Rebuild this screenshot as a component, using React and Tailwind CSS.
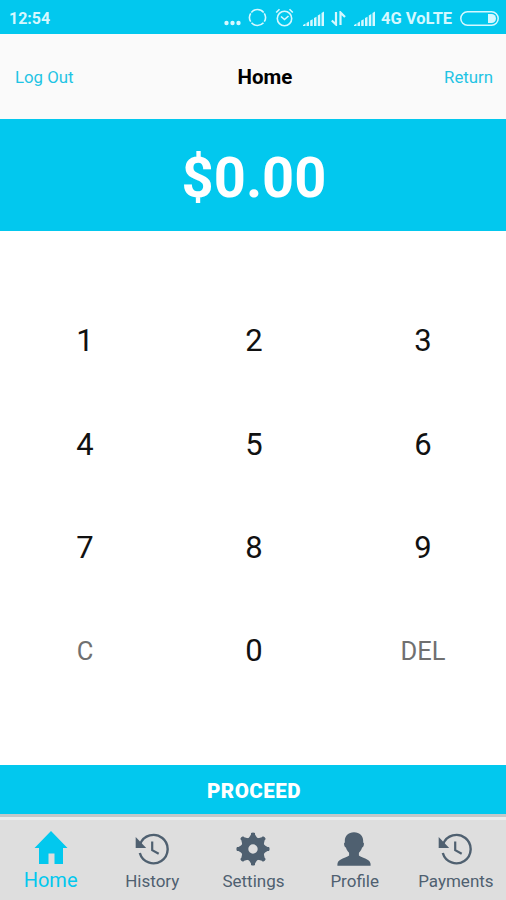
import { useState } from 'react';

const KEYS = ['1', '2', '3', '4', '5', '6', '7', '8', '9', 'C', '0', 'DEL'];

function HomeIcon() {
  return (
    <svg width="34" height="34" viewBox="0 0 34 34" fill="currentColor">
      <path d="M17 0 33.500 17H29v16h-8.500V22.500h-6V33H5V17H.5z" />
    </svg>
  );
}

function HistoryIcon() {
  return (
    <svg width="34" height="34" viewBox="0 0 34 34" fill="none" stroke="currentColor">
      <path d="M5.200 12A14.200 14.200 0 1 1 4.800 21" strokeWidth="2.400" />
      <path d="M.7 5v11h10.500z" fill="currentColor" stroke="none" />
      <path d="M17.200 9.500v8.700l6.500 3.600" strokeWidth="2.200" />
    </svg>
  );
}

function GearIcon() {
  return (
    <svg width="34" height="34" viewBox="-17 -17 34 34">
      <g fill="currentColor">
        {[0, 45, 90, 135, 180, 225, 270, 315].map((deg) => (
          <path key={deg} d="M-4.500-10.500-2-14.500v-1.500q2-1.200 4 0v1.500L4.500-10.500z" transform={`rotate(${deg})`} />
        ))}
      </g>
      <circle r="8.400" fill="none" stroke="currentColor" strokeWidth="7.400" />
    </svg>
  );
}

function PersonIcon() {
  return (
    <svg width="34" height="34" viewBox="0 0 34 34" fill="currentColor">
      <path d="M17 .3c5.800 0 9.200 3.600 9.200 8.600 0 .6-.1 1.200-.1 1.600.9.300 1 1.200.7 2.500-.3 1.400-.9 2.300-1.700 2.500-.7 2.400-1.900 4.100-3.200 5.300v2.700c2.300 2 10.900 3.200 11.600 8 .1.700.1 1.500.1 2.300H.4c0-.8 0-1.600.1-2.300.7-4.800 9.300-6 11.600-8v-2.700c-1.300-1.200-2.500-2.900-3.200-5.300-.8-.2-1.400-1.100-1.700-2.500-.3-1.300-.2-2.200.7-2.500 0-.4-.1-1-.1-1.600 0-5 3.400-8.600 9.200-8.600z" />
    </svg>
  );
}

function Signal() {
  return (
    <svg width="22" height="15" viewBox="0 0 22 15" fill="currentColor">
      <path d="M0 15v-1l2.500-1.500V15zM3.500 15v-3L6 10.500V15zM7.200 15V9.500l2.500-1.200V15zM11 15V7l2.500-1.200V15zM14.800 15V4.500l2.500-1.400V15zM18.500 15V2L21 .5V15z" />
    </svg>
  );
}

const TABS = [
  { name: 'Home', icon: HomeIcon },
  { name: 'History', icon: HistoryIcon },
  { name: 'Settings', icon: GearIcon },
  { name: 'Profile', icon: PersonIcon },
  { name: 'Payments', icon: HistoryIcon },
];

function StatusBar() {
  return (
    <div className="flex h-[34px] items-center bg-[#02c8ee] pr-[7px] pl-[9px] pt-[2px] text-[#d5f8ff]">
      <span className="pt-[2px] text-[16px] font-bold">12:54</span>
      <svg className="mt-[9px] ml-auto" width="18" height="6" viewBox="0 0 18 6" fill="currentColor">
        <circle cx="2.500" cy="3" r="2.200" />
        <circle cx="8.500" cy="3" r="2.200" />
        <circle cx="14.500" cy="3" r="2.200" />
      </svg>
      <svg className="ml-[6px] mr-[1px] mb-[1px]" width="19" height="19" viewBox="0 0 19 19" fill="none" stroke="currentColor" strokeWidth="1.600">
        <path d="M3.300 4.500a8 8 0 0 1 12.400 0M16.300 5.300a8 8 0 0 1 0 8.400M15.500 14.800a8 8 0 0 1-12 0M2.700 13.700a8 8 0 0 1 0-8.400" />
      </svg>
      <svg className="ml-[7px] mr-[1px] mb-[2px]" width="19" height="19" viewBox="0 0 19 19" fill="none" stroke="currentColor" strokeWidth="1.600">
        <circle cx="9.500" cy="10.500" r="7.200" />
        <path d="M1.200 4.500 4.500 1.200M17.800 4.500l-3.300-3.300M6 8.500l3.500 3 4-3.500" />
      </svg>
      <span className="ml-[8px]"><Signal /></span>
      <svg className="ml-[6px]" width="15" height="15" viewBox="0 0 15 15" fill="none" stroke="currentColor" strokeWidth="2.200">
        <path d="M5 1v12.500L.8 9.500M9.500 14V1.500L14 6" />
      </svg>
      <span className="ml-[8px]"><Signal /></span>
      <span className="ml-[5px] w-[74px] pt-[2px] text-[16.500px] font-bold whitespace-nowrap">4G VoLTE</span>
      <svg className="ml-[5px]" width="39" height="15" viewBox="0 0 39 15">
        <rect x=".8" y=".8" width="37.400" height="13.400" rx="6.700" fill="none" stroke="currentColor" strokeWidth="1.500" />
        <path d="M28 3h3.500a4.500 4.500 0 0 1 0 9H28z" fill="currentColor" />
      </svg>
    </div>
  );
}

export default function App() {
  const [cents, setCents] = useState(0);
  const [activeTab, setActiveTab] = useState('Home');

  const handleKey = (key) => {
    if (key === 'C') setCents(0);
    else if (key === 'DEL') setCents(Math.floor(cents / 10));
    else setCents(cents * 10 + Number(key));
  };

  return (
    <div className="flex h-[900px] w-[506px] flex-col overflow-hidden bg-white font-['Roboto',sans-serif]">
      <StatusBar />

      <header className="grid h-[85px] grid-cols-3 items-center bg-[#fafafa] pr-[13px] pl-[15px]">
        <button className="pt-[2px] text-left text-[16.800px] text-[#1fc4e4]">Log Out</button>
        <h1 className="pt-[2px] pl-[22px] text-center text-[20.500px] font-bold text-black">Home</h1>
        <button className="pt-[2px] text-right text-[16.800px] text-[#1fc4e4]">Return</button>
      </header>

      <div className="flex h-[112px] items-center justify-center bg-[#02c8ee] pt-[5px] pl-[2px] text-[56px] font-bold text-white">
        ${(cents / 100).toFixed(2)}
      </div>

      {/* Keypad */}
      <div className="grid h-[534px] grid-cols-[repeat(3,169px)] grid-rows-[repeat(4,103.300px)] content-center pb-[3px]">
        {KEYS.map((key) => (
          <button
            key={key}
            onClick={() => handleKey(key)}
            className={`pl-px ${key === 'C' || key === 'DEL' ? 'text-[25.500px] text-[#707070]' : 'text-[31px] text-[#111111]'}`}
          >
            {key}
          </button>
        ))}
      </div>

      <button className="h-[49px] bg-[#02c8ee] pt-[3px] pl-[2px] text-[20.500px] font-black tracking-[0.5px] text-white">PROCEED</button>

      {/* Bottom tabs */}
      <div className="h-[3px] bg-[#c4c8c9]" />
      <div className="h-[3px] bg-[#ececec]" />
      <nav className="grid h-[80px] grid-cols-5 bg-[#dedede]">
        {TABS.map(({ name, icon: Icon }) => (
          <button
            key={name}
            onClick={() => setActiveTab(name)}
            className={`flex flex-col items-center whitespace-nowrap ${
              activeTab === name
                ? 'pt-[11px] text-[20px] leading-[31px] text-[#02c8ee]'
                : 'pt-[12px] text-[17px] leading-[30px] text-[#4f6070]'
            }`}
          >
            <Icon />
            <span className={activeTab === name ? '' : 'pl-px'}>{name}</span>
          </button>
        ))}
      </nav>
    </div>
  );
}
